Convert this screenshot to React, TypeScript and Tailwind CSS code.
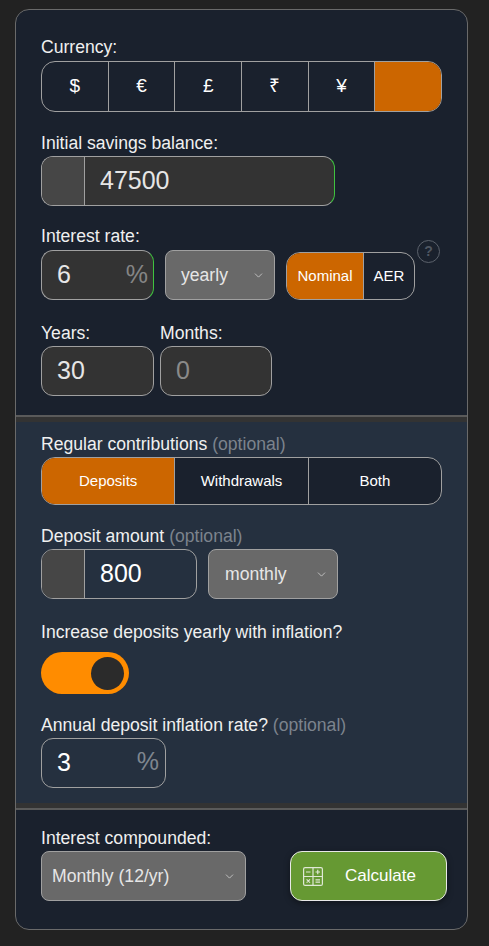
import { ReactNode } from 'react';
import { ChevronDown } from 'lucide-react';

const labelCls = 'block text-[17.6px] leading-[19px] text-[#f0f0f0]';
const fieldCls = 'h-[50px] border border-[#a0a0a0] rounded-[12px] text-[25px] flex items-center';
const optional = 'text-[#7c838d]';

function Label({ children }: { children: ReactNode }) {
  return <div className={labelCls}>{children}</div>;
}

function Segmented({ items, active, height, textSize }: { items: string[]; active: number; height: string; textSize: string }) {
  return (
    <div className={`flex w-[401px] ${height} border border-[#a0a0a0] rounded-[14px] overflow-hidden bg-[#1a212d]`}>
      {items.map((item, i) => (
        <div
          key={i}
          className={`flex-1 flex items-center justify-center text-white ${textSize} ${i > 0 ? 'border-l border-[#a0a0a0]' : ''} ${i === active ? 'bg-[#cc6600]' : ''}`}
        >
          {item}
        </div>
      ))}
    </div>
  );
}

function SelectBox({ text, width, pad, textSize }: { text: string; width: string; pad: string; textSize: string }) {
  return (
    <div className={`${width} ${pad} h-[50px] border border-[#a0a0a0] rounded-[8px] bg-[#696969] flex items-center justify-between ${textSize} text-[#e6e6e6]`}>
      <span>{text}</span>
      <ChevronDown size={13} strokeWidth={1.25} className="text-[#e6e6e6]" />
    </div>
  );
}

export default function App() {
  return (
    <div className="min-h-[946px] bg-[#222222] pt-[9px] pl-[15px] font-['Liberation_Sans',Arial,sans-serif]">
      <div className="w-[453px] h-[921px] border border-[#6a6a6a] rounded-[14px] overflow-hidden flex flex-col bg-[#1a212d]">
        <section className="h-[405px] pl-[25px] pt-[28px]">
          <Label>Currency:</Label>
          <div className="mt-[4px]">
            <Segmented items={['$', '€', '£', '₹', '¥', '']} active={5} height="h-[51px]" textSize="text-[19px]" />
          </div>

          <div className="mt-[22px]">
            <Label>Initial savings balance:</Label>
          </div>
          <div className={`${fieldCls} mt-[3px] w-[294px] bg-[#333333] overflow-hidden border-r-[#3fc33f] text-[#e6e6e6]`}>
            <div className="w-[43px] h-full bg-[#464646] border-r border-[#a0a0a0]" />
            <span className="pl-[15px]">47500</span>
          </div>

          <div className="mt-[21px]">
            <Label>Interest rate:</Label>
          </div>
          <div className="mt-[4px] flex items-start">
            <div className={`${fieldCls} w-[113px] bg-[#333333] border-r-[#3fc33f] text-[#e6e6e6] pl-[15px] pr-[5px] justify-between`}>
              <span>6</span>
              <span className="text-[#858585]">%</span>
            </div>
            <div className="ml-[11px]">
              <SelectBox text="yearly" width="w-[110px]" pad="pl-[15px] pr-[9px]" textSize="text-[17.6px]" />
            </div>
            <div className="ml-[11px] mt-[2px] w-[129px] h-[48px] border border-[#a0a0a0] rounded-[14px] overflow-hidden flex text-[15px] text-white">
              <div className="w-[76px] bg-[#cc6600] flex items-center justify-center">Nominal</div>
              <div className="flex-1 border-l border-[#a0a0a0] flex items-center justify-center">AER</div>
            </div>
            <div className="ml-[2px] -mt-[10px] w-[23px] h-[23px] rounded-full border border-[#5c626c] text-[#4f5661] text-[14px] font-bold flex items-center justify-center">?</div>
          </div>

          <div className="mt-[24px] flex gap-[6px]">
            <div className="w-[113px]">
              <Label>Years:</Label>
              <div className={`${fieldCls} mt-[3px] bg-[#333333] text-[#e6e6e6] pl-[15px]`}>30</div>
            </div>
            <div className="w-[112px]">
              <Label>Months:</Label>
              <div className={`${fieldCls} mt-[3px] bg-[#333333] text-[#8a8a8a] pl-[15px]`}>0</div>
            </div>
          </div>
        </section>

        <div className="h-[2px] bg-[#5a5a5a]" />
        <section className="h-[391px] bg-[#25303f] border-t-[5px] border-b-[5px] border-[#333333] pl-[25px] pt-[13px]">
          <Label>
            Regular contributions <span className={optional}>(optional)</span>
          </Label>
          <div className="mt-[3px]">
            <Segmented items={['Deposits', 'Withdrawals', 'Both']} active={0} height="h-[48px]" textSize="text-[15px]" />
          </div>

          <div className="mt-[22px]">
            <Label>
              Deposit amount <span className={optional}>(optional)</span>
            </Label>
          </div>
          <div className="mt-[3px] flex gap-[11px]">
            <div className={`${fieldCls} w-[156px] overflow-hidden text-white`}>
              <div className="w-[43px] h-full bg-[#464646] border-r border-[#a0a0a0]" />
              <span className="pl-[15px]">800</span>
            </div>
            <SelectBox text="monthly" width="w-[130px]" pad="pl-[16px] pr-[9px]" textSize="text-[17.6px]" />
          </div>

          <div className="mt-[24px]">
            <Label>Increase deposits yearly with inflation?</Label>
          </div>
          <div className="mt-[10px] w-[88px] h-[42px] rounded-full bg-[#ff8c00] flex items-center justify-end pr-[5px]">
            <div className="w-[33px] h-[33px] rounded-full bg-[#2b2b2b]" />
          </div>

          <div className="mt-[22px]">
            <Label>
              Annual deposit inflation rate? <span className={optional}>(optional)</span>
            </Label>
          </div>
          <div className={`${fieldCls} mt-[3px] w-[125px] text-white pl-[15px] pr-[6px] justify-between`}>
            <span>3</span>
            <span className="text-[#7f868f] -mt-[3px]">%</span>
          </div>
        </section>

        <div className="h-[2px] bg-[#5a5a5a]" />
        <section className="flex-1 pl-[25px] pt-[19px]">
          <Label>Interest compounded:</Label>
          <div className="mt-[3px] flex">
            <SelectBox text="Monthly (12/yr)" width="w-[205px]" pad="pl-[10px] pr-[9px]" textSize="text-[17.6px]" />
            <button className="ml-[44px] w-[157px] h-[50px] rounded-[12px] border border-[#e8e8e8] bg-[#669933] shadow-[0_2px_6px_rgba(0,0,0,0.4)] flex items-center text-white text-[17px] pl-[12px]">
              <svg width="20" height="19" viewBox="0 0 20 19" fill="none" stroke="#dfe8d5" strokeWidth="1.2">
                <rect x="0.6" y="0.6" width="18.8" height="17.8" rx="1.5" />
                <path d="M10 0.6V18.4M0.6 9.5H19.4" />
                <path d="M3 5H7.5M12.5 5H17M14.75 2.8V7.2M3.6 12.3L7 15.7M7 12.3L3.6 15.7M12.5 12.8H17M12.5 15.2H17" />
              </svg>
              <span className="ml-[22px]">Calculate</span>
            </button>
          </div>
        </section>
      </div>
    </div>
  );
}
